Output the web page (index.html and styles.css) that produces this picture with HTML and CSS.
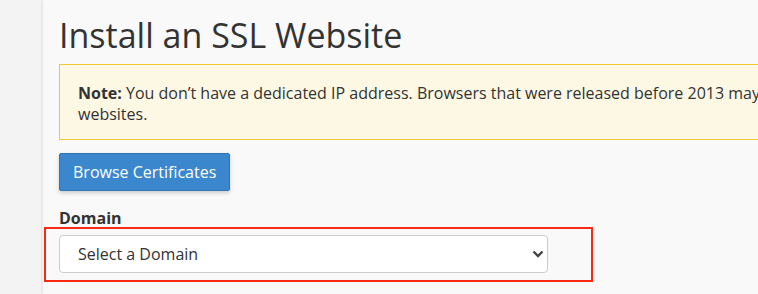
FILE: index.html
```html
<!DOCTYPE html>
<html lang="en">
<head>
    <meta charset="UTF-8">
    <title>Install an SSL Website</title>
    <link rel="stylesheet" href="styles.css">
</head>
<body>
    <div class="layout">
        <aside class="sidebar"></aside>
        <main class="content">
            <h1>Install an SSL Website</h1>
            <div class="note">
                <strong>Note:</strong> You don’t have a dedicated IP address. Browsers that were released before 2013 may not support SSL on these websites.
            </div>
            <button class="btn-primary">Browse Certificates</button>
            <label class="field-label" for="domain">Domain</label>
            <div class="highlight">
                <div class="select-wrap">
                    <select id="domain">
                        <option>Select a Domain</option>
                    </select>
                    <svg class="chevron" width="12" height="8" viewBox="0 0 12 8">
                        <path d="M1.5 1.5 L6 6 L10.5 1.5" fill="none" stroke="#444" stroke-width="2.4"/>
                    </svg>
                </div>
            </div>
        </main>
    </div>
</body>
</html>
```

FILE: styles.css
```css
html, body {
    margin: 0;
    padding: 0;
    height: 100%;
    overflow: hidden;
}
body {
    font-family: 'Open Sans', 'Noto Sans', sans-serif;
    color: #333;
    background-color: #f9f9f9;
}
.layout {
    display: flex;
    height: 100%;
}
.sidebar {
    flex: 0 0 41px;
    background-color: #f3f3f3;
    box-shadow: 1px 0 3px rgba(0, 0, 0, 0.12);
    z-index: 1;
}
.content {
    flex: 0 0 1000px;
    padding: 0 0 0 18px;
    display: flex;
    flex-direction: column;
    align-items: flex-start;
}
.content h1 {
    margin: 13px 0 0;
    font-size: 34px;
    font-weight: 400;
    line-height: 44px;
    color: #333;
}
.note {
    box-sizing: border-box;
    width: 952px;
    margin-top: 7px;
    padding: 18px 18px 14px;
    background-color: #fcf8e3;
    border: 1px solid #f0c736;
    font-size: 16px;
    line-height: 21px;
}
.btn-primary {
    margin-top: 13px;
    height: 38px;
    padding: 0 13px;
    background-color: #3a87cd;
    border: 1px solid #2f74b5;
    border-radius: 2px;
    color: #fff;
    font-family: inherit;
    font-size: 16px;
    box-shadow: 0 2px 4px rgba(0, 0, 0, 0.18);
}
.field-label {
    margin-top: 16px;
    font-size: 16px;
    font-weight: 700;
    line-height: 22px;
}
.highlight {
    margin: -2px 0 0 -15px;
    padding: 6px 43px 7px 13px;
    border: 2px solid #fa2a12;
}
.select-wrap {
    position: relative;
    width: 489px;
}
.select-wrap select {
    display: block;
    width: 100%;
    height: 38px;
    padding: 0 18px;
    appearance: none;
    background-color: #fff;
    border: 1px solid #ccc;
    border-radius: 4px;
    color: #333;
    font-family: inherit;
    font-size: 16px;
}
.chevron {
    position: absolute;
    top: 15px;
    right: 4px;
}
```
